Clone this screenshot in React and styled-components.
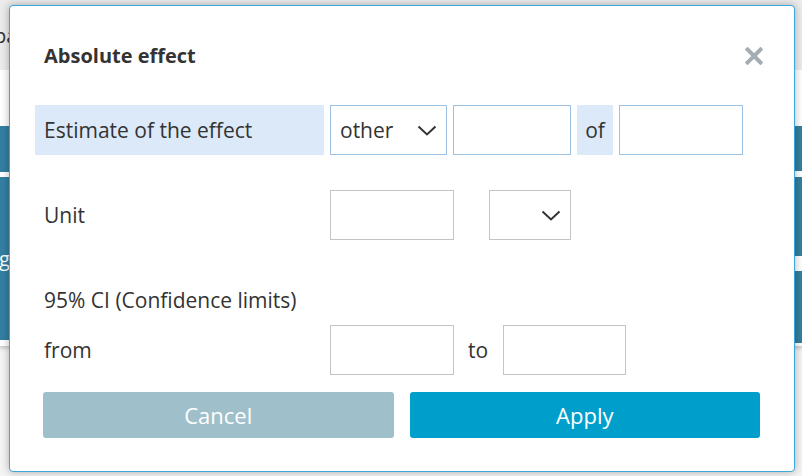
import React from 'react';
import styled, { createGlobalStyle } from 'styled-components';

const GlobalStyle = createGlobalStyle`
  html, body {
    margin: 0;
    padding: 0;
    background: #f4f4f4;
  }
  body {
    font-family: "Open Sans", "Noto Sans", sans-serif;
    color: #333;
    overflow: hidden;
  }
`;

const Page = styled.div`
  position: relative;
  width: 802px;
  height: 476px;
  overflow: hidden;
`;

// page behind the dialog
const TopBar = styled.div`
  height: 70px;
  background: #ececec;
  display: flex;
  align-items: center;
  font-size: 20px;
  color: #333;
  text-indent: -6px;
`;

const Gap = styled.div`
  height: 56px;
  background: #fff;
`;

const Table = styled.div`
  display: flex;
  justify-content: space-between;
  background: #fff;
  height: 220px;
  border-bottom: 1px solid #d0d0d0;
  box-shadow: 0 2px 3px rgba(0, 0, 0, 0.15);
`;

const Column = styled.div`
  width: 30px;
  display: flex;
  flex-direction: column;
`;

const Cell = styled.div`
  height: ${p => p.h}px;
  margin-top: ${p => p.mt || 0}px;
  background: #347fa1;
  color: #fff;
  font-size: 20px;
  display: flex;
  align-items: center;
  text-indent: -6px;
  text-decoration: underline;
`;

const Dialog = styled.div`
  position: absolute;
  left: 9px;
  top: 5px;
  width: 786px;
  height: 467px;
  background: #fff;
  border: 1px solid #3ba7da;
  border-radius: 4px;
  box-shadow: 0 0 8px rgba(0, 0, 0, 0.3);
  padding: 0 34px 0 25px;
  box-sizing: border-box;
`;

const Header = styled.div`
  display: flex;
  align-items: center;
  justify-content: space-between;
  padding: 38px 0 0 9px;
  height: 24px;
  margin-bottom: 37px;
`;

const Title = styled.h2`
  margin: 0;
  font-size: 20px;
  font-weight: 700;
  color: #333;
  line-height: 24px;
`;

const Close = styled.button`
  border: 0;
  background: none;
  padding: 0;
  margin-right: -4px;
  width: 20px;
  height: 20px;
  display: flex;
  align-items: center;
  justify-content: center;
  cursor: pointer;
`;

const Row = styled.div`
  display: flex;
  align-items: stretch;
  gap: 6px;
  height: 50px;
  margin-top: ${p => p.mt || 0}px;
`;

const Label = styled.div`
  width: 289px;
  padding-left: 9px;
  box-sizing: border-box;
  display: flex;
  align-items: center;
  font-size: 21px;
  background: ${p => (p.highlight ? '#dce9f8' : 'transparent')};
`;

const Heading = styled.div`
  margin-top: ${p => p.mt}px;
  padding-left: 9px;
  font-size: 21px;
  line-height: 24px;
`;

const Input = styled.input`
  width: ${p => p.w}px;
  margin-left: ${p => p.ml || 0}px;
  box-sizing: border-box;
  border: 1px solid ${p => (p.blue ? '#9ec2e6' : '#c4c4c4')};
  font-family: inherit;
  font-size: 21px;
  padding: 0 10px;
  outline: none;
`;

const SelectBox = styled.div`
  width: ${p => p.w}px;
  margin-left: ${p => p.ml || 0}px;
  box-sizing: border-box;
  border: 1px solid ${p => (p.blue ? '#9ec2e6' : '#c4c4c4')};
  display: flex;
  align-items: center;
  justify-content: space-between;
  padding: 0 9px 0 9px;
  font-size: 21px;
  color: #333;
`;

const Word = styled.div`
  display: flex;
  align-items: center;
  justify-content: ${p => (p.center ? 'center' : 'flex-start')};
  font-size: 21px;
  width: ${p => p.w}px;
  padding-left: ${p => p.pl || 0}px;
  box-sizing: border-box;
  background: ${p => (p.highlight ? '#dce9f8' : 'transparent')};
`;

const Footer = styled.div`
  display: flex;
  gap: 16px;
  margin: 17px 0 0 8px;
`;

const Button = styled.button`
  flex: 1;
  height: 46px;
  border: 0;
  border-radius: 3px;
  font-family: inherit;
  font-size: 22px;
  color: #fff;
  background: ${p => (p.primary ? '#009fcb' : '#9fbfcb')};
  cursor: pointer;
`;

const Chevron = () => (
  <svg width="20" height="11" viewBox="0 0 20 11" fill="none">
    <path d="M1.5 1.5 L10 9.5 L18.5 1.5" stroke="#333" strokeWidth="2" />
  </svg>
);

const CloseIcon = () => (
  <svg width="18" height="18" viewBox="0 0 18 18">
    <path d="M2.5 2.5 L15.5 15.5 M15.5 2.5 L2.5 15.5" stroke="#a6adb2" strokeWidth="4" strokeLinecap="square" />
  </svg>
);

export default function App() {
  return (
    <Page>
      <GlobalStyle />
      <TopBar>pa</TopBar>
      <Gap />
      <Table>
        <Column>
          <Cell h={46} />
          <Cell h={163} mt={5}>ig</Cell>
        </Column>
        <Column>
          <Cell h={45} />
          <Cell h={79} mt={6} />
          <Cell h={72} mt={15} />
        </Column>
      </Table>

      <Dialog>
        <Header>
          <Title>Absolute effect</Title>
          <Close aria-label="close"><CloseIcon /></Close>
        </Header>

        <Row>
          <Label highlight>Estimate of the effect</Label>
          <SelectBox blue w={117}>other<Chevron /></SelectBox>
          <Input blue w={118} />
          <Word highlight center w={36}>of</Word>
          <Input blue w={124} />
        </Row>

        <Row mt={35}>
          <Label>Unit</Label>
          <Input w={124} />
          <SelectBox w={82} ml={29}><span /><Chevron /></SelectBox>
        </Row>

        <Heading mt={48}>95% CI (Confidence limits)</Heading>

        <Row mt={13}>
          <Label>from</Label>
          <Input w={124} />
          <Word w={37} pl={8}>to</Word>
          <Input w={123} />
        </Row>

        <Footer>
          <Button>Cancel</Button>
          <Button primary>Apply</Button>
        </Footer>
      </Dialog>
    </Page>
  );
}
